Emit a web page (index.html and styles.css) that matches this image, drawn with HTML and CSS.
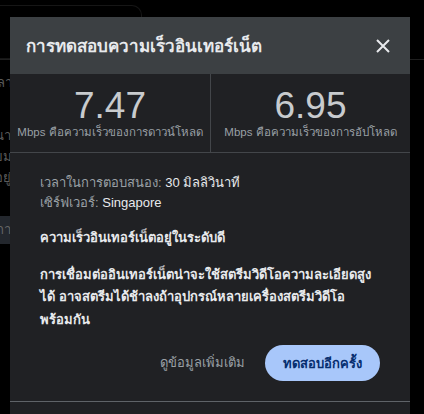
FILE: index.html
```html
<!DOCTYPE html>
<html>
<head>
  <meta charset="UTF-8">
  <title>การทดสอบความเร็วอินเทอร์เน็ต</title>
  <link rel="stylesheet" href="styles.css">
</head>
<body>
  <div class="page">
    <div class="bg-card"></div>
    <div class="bg-rule"></div>
    <div class="bg-text">
      <p class="bg-line first">เวลาในการ</p>
      <p class="bg-line gap">ขนาด</p>
      <p class="bg-line">นิยม</p>
      <p class="bg-line">ที่อยู่</p>
      <div class="bg-bar">การตั้งค่า</div>
    </div>
  </div>

  <div class="dialog">
    <div class="dialog-head">
      <h1>การทดสอบความเร็วอินเทอร์เน็ต</h1>
      <button class="close" aria-label="ปิด">
        <svg width="14" height="14" viewBox="0 0 14 14">
          <path d="M1 1 L13 13 M13 1 L1 13" stroke="#e8eaed" stroke-width="2" fill="none"/>
        </svg>
      </button>
    </div>

    <div class="stats">
      <div class="stat">
        <div class="num">7.47</div>
        <div class="unit">Mbps คือความเร็วของการดาวน์โหลด</div>
      </div>
      <div class="stat">
        <div class="num">6.95</div>
        <div class="unit">Mbps คือความเร็วของการอัปโหลด</div>
      </div>
    </div>

    <div class="dialog-body">
      <p class="meta">เวลาในการตอบสนอง: <span class="val">30 มิลลิวินาที</span><br>
        เซิร์ฟเวอร์: <span class="val">Singapore</span></p>
      <p class="verdict">ความเร็วอินเทอร์เน็ตอยู่ในระดับดี</p>
      <p class="verdict">การเชื่อมต่ออินเทอร์เน็ตน่าจะใช้สตรีมวิดีโอความละเอียดสูง<br>ได้ อาจสตรีมได้ช้าลงถ้าอุปกรณ์หลายเครื่องสตรีมวิดีโอ<br>พร้อมกัน</p>
      <div class="actions">
        <a class="more" href="#">ดูข้อมูลเพิ่มเติม</a>
        <button class="again">ทดสอบอีกครั้ง</button>
      </div>
    </div>
    <div class="dialog-foot"></div>
  </div>
</body>
</html>
```

FILE: styles.css
```css
body {
  margin: 0;
  background: #000;
  font-family: "Liberation Sans", "Noto Sans", sans-serif;
  overflow: hidden;
  height: 414px;
}

/* page behind the dialog */
.page {
  padding-top: 5px;
}
.bg-card {
  width: 141px;
  height: 52px;
  border: 1px solid #161616;
  border-left: none;
  border-radius: 0 10px 0 0;
}
.bg-rule {
  border-top: 1px solid #1f1f1f;
}
.bg-text {
  margin-left: -14px;
  color: #5a5a5a;
  font-size: 13px;
}
.bg-line {
  margin: 0;
  line-height: 21px;
}
.bg-line.first {
  margin-top: 12px;
}
.bg-line.gap {
  margin-top: 32px;
}
.bg-bar {
  margin-top: 28px;
  margin-left: 14px;
  width: 140px;
  height: 28px;
  line-height: 28px;
  background: #23272d;
  color: #666;
  text-indent: -4px;
}

/* dialog */
.dialog {
  position: absolute;
  left: 10px;
  top: 17px;
  width: 400px;
  height: 400px;
  background: #202124;
}
.dialog-head {
  height: 57px;
  background: #3c4043;
  display: flex;
  align-items: center;
  justify-content: space-between;
  padding: 0 20px 0 16px;
}
.dialog-head h1 {
  margin: 0;
  font-size: 17px;
  font-weight: bold;
  color: #e8eaed;
}
.close {
  background: none;
  border: none;
  padding: 0;
  width: 14px;
  height: 14px;
  cursor: pointer;
}

.stats {
  display: grid;
  grid-template-columns: 1fr 1fr;
  height: 78px;
  border-bottom: 1px solid #43464a;
}
.stat {
  text-align: center;
  padding-top: 13px;
}
.stat + .stat {
  border-left: 1px solid #43464a;
}
.num {
  font-size: 37px;
  line-height: 37px;
  color: #c8cbce;
}
.unit {
  font-size: 11.5px;
  color: #9aa0a6;
  margin-top: -1px;
}

.dialog-body {
  padding: 20px 30px 0 30px;
  font-size: 13px;
  color: #e8eaed;
  line-height: 22px;
}
.dialog-body p {
  margin: 0 0 14px 0;
}
.meta {
  color: #9aa0a6;
  line-height: 20px;
}
.meta .val {
  color: #e8eaed;
}
.verdict {
  font-weight: bold;
  line-height: 22.5px;
}
.actions {
  display: flex;
  justify-content: flex-end;
  align-items: center;
  gap: 20px;
  margin-top: 4px;
}
.more {
  color: #9aa0a6;
  text-decoration: none;
}
.again {
  height: 36px;
  padding: 0 18px;
  border: none;
  border-radius: 18px;
  background: #a8c7fa;
  color: #062e6f;
  font-family: inherit;
  font-size: 13px;
  font-weight: bold;
  cursor: pointer;
}
.dialog-foot {
  margin-top: 20px;
  border-top: 1px solid #5f6368;
}
```
